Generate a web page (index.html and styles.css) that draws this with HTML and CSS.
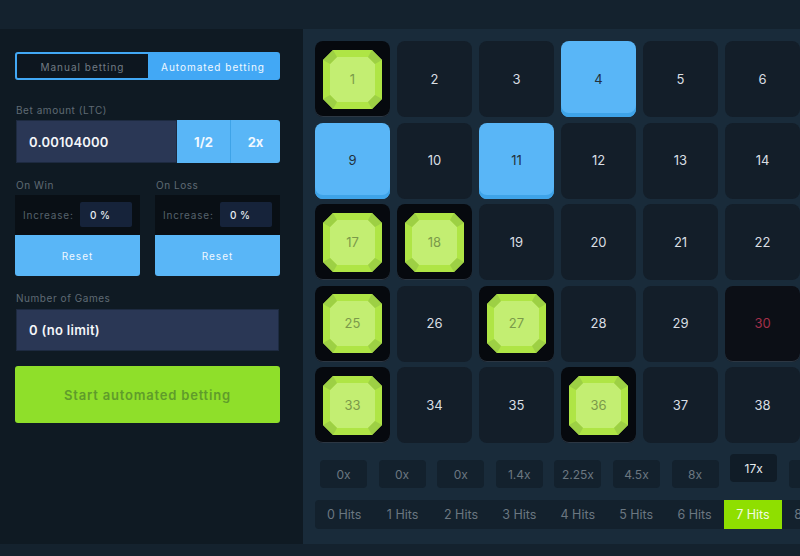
FILE: index.html
```html
<!DOCTYPE html>
<html>
<head>
    <title>Keno</title>
    <link rel="stylesheet" href="styles.css">
</head>
<body>
    <svg class="svg-defs" width="0" height="0">
        <symbol id="gem" viewBox="0 0 59 59">
            <polygon fill="#afe545" points="10,0 49,0 59,10 59,49 49,59 10,59 0,49 0,10"/>
            <polygon fill="#c3ee72" points="14,7 45,7 52,14 52,45 45,52 14,52 7,45 7,14"/>
            <polygon fill="#9dd044" points="10,0 14,7 7,14 0,10"/>
            <polygon fill="#9dd044" points="49,0 59,10 52,14 45,7"/>
            <polygon fill="#9dd044" points="59,49 49,59 45,52 52,45"/>
            <polygon fill="#9dd044" points="10,59 0,49 7,45 14,52"/>
        </symbol>
    </svg>
    <div class="topbar"></div>
    <div class="main">
        <div class="side">
            <div class="mode-toggle">
                <span class="mode-btn">Manual betting</span>
                <span class="mode-btn selected">Automated betting</span>
            </div>
            <div class="field-label bet-label">Bet amount (LTC)</div>
            <div class="bet-row">
                <span class="bet-input">0.00104000</span>
                <span class="bet-btn half">1/2</span>
                <span class="bet-btn double">2x</span>
            </div>
            <div class="strategy">
                <div class="strategy-col">
                    <div class="field-label">On Win</div>
                    <div class="increase-box">
                        <span class="increase-label">Increase:</span>
                        <span class="increase-input">0 %</span>
                    </div>
                    <div class="reset-btn">Reset</div>
                </div>
                <div class="strategy-col">
                    <div class="field-label">On Loss</div>
                    <div class="increase-box">
                        <span class="increase-label">Increase:</span>
                        <span class="increase-input">0 %</span>
                    </div>
                    <div class="reset-btn">Reset</div>
                </div>
            </div>
            <div class="field-label games-label">Number of Games</div>
            <div class="games-input">0 (no limit)</div>
            <div class="start-btn">Start automated betting</div>
        </div>
        <div class="board">
            <div class="grid">
                <div class="tile gem"><svg><use href="#gem"/></svg><span>1</span></div>
                <div class="tile"><span>2</span></div>
                <div class="tile"><span>3</span></div>
                <div class="tile picked"><span>4</span></div>
                <div class="tile"><span>5</span></div>
                <div class="tile"><span>6</span></div>
                <div class="tile picked"><span>9</span></div>
                <div class="tile"><span>10</span></div>
                <div class="tile picked"><span>11</span></div>
                <div class="tile"><span>12</span></div>
                <div class="tile"><span>13</span></div>
                <div class="tile"><span>14</span></div>
                <div class="tile gem"><svg><use href="#gem"/></svg><span>17</span></div>
                <div class="tile gem"><svg><use href="#gem"/></svg><span>18</span></div>
                <div class="tile"><span>19</span></div>
                <div class="tile"><span>20</span></div>
                <div class="tile"><span>21</span></div>
                <div class="tile"><span>22</span></div>
                <div class="tile gem"><svg><use href="#gem"/></svg><span>25</span></div>
                <div class="tile"><span>26</span></div>
                <div class="tile gem"><svg><use href="#gem"/></svg><span>27</span></div>
                <div class="tile"><span>28</span></div>
                <div class="tile"><span>29</span></div>
                <div class="tile miss"><span>30</span></div>
                <div class="tile gem"><svg><use href="#gem"/></svg><span>33</span></div>
                <div class="tile"><span>34</span></div>
                <div class="tile"><span>35</span></div>
                <div class="tile gem"><svg><use href="#gem"/></svg><span>36</span></div>
                <div class="tile"><span>37</span></div>
                <div class="tile"><span>38</span></div>
            </div>
            <div class="payouts">
                <span class="payout">0x</span>
                <span class="payout">0x</span>
                <span class="payout">0x</span>
                <span class="payout">1.4x</span>
                <span class="payout">2.25x</span>
                <span class="payout">4.5x</span>
                <span class="payout">8x</span>
                <span class="payout current">17x</span>
                <span class="payout"></span>
            </div>
            <div class="hits">
                <span class="hit">0 Hits</span>
                <span class="hit">1 Hits</span>
                <span class="hit">2 Hits</span>
                <span class="hit">3 Hits</span>
                <span class="hit">4 Hits</span>
                <span class="hit">5 Hits</span>
                <span class="hit">6 Hits</span>
                <span class="hit current">7 Hits</span>
                <span class="hit">8 Hits</span>
            </div>
        </div>
    </div>
    <div class="bottombar"></div>
</body>
</html>
```

FILE: styles.css
```css
html, body {
    margin: 0;
    height: 100%;
}
body {
    width: 800px;
    height: 556px;
    overflow: hidden;
    background: #14222e;
    font-family: Inter, "Open Sans", sans-serif;
    display: flex;
    flex-direction: column;
}
.svg-defs {
    display: block;
    height: 0;
}
.topbar {
    height: 29px;
    flex: none;
    background: #14222e;
}
.bottombar {
    height: 12px;
    flex: none;
    background: #14222e;
}
.main {
    display: flex;
    height: 515px;
    flex: none;
}
.side {
    width: 303px;
    flex: none;
    box-sizing: border-box;
    padding: 23px 23px 0 15px;
    background: #0f1a23;
}
.mode-toggle {
    display: flex;
    height: 28px;
    box-sizing: border-box;
    border: 2px solid #42a8f5;
    border-radius: 3px;
    background: #0d161f;
}
.mode-btn {
    flex: 1;
    display: flex;
    align-items: center;
    justify-content: center;
    padding-top: 1px;
    font-size: 10px;
    letter-spacing: 1px;
    color: #717b84;
}
.mode-btn.selected {
    flex: none;
    width: 130px;
    background: #42a8f5;
    color: #f0f8ff;
}
.field-label {
    font-size: 10px;
    letter-spacing: 0.55px;
    color: #5f6a74;
    line-height: 12px;
    padding-left: 1px;
}
.bet-label {
    margin-top: 24px;
    margin-bottom: 4px;
}
.bet-row {
    display: flex;
    height: 43px;
}
.bet-input {
    width: 161px;
    margin-left: 1px;
    box-sizing: border-box;
    padding-left: 12px;
    display: flex;
    align-items: center;
    background: #2a3755;
    border: 1px solid #1d2a40;
    font-size: 13px;
    font-weight: 600;
    letter-spacing: 0.2px;
    color: #f4f6f9;
}
.bet-btn {
    display: flex;
    align-items: center;
    justify-content: center;
    background: #59b6f7;
    font-size: 13px;
    font-weight: 700;
    color: #f0f8ff;
}
.half {
    width: 53px;
    border-right: 1px solid #3ea3e8;
}
.double {
    flex: 1;
    border-radius: 0 3px 3px 0;
}
.strategy {
    display: flex;
    gap: 15px;
    margin-top: 16px;
}
.strategy-col {
    flex: 1;
}
.strategy-col .field-label {
    margin-bottom: 4px;
}
.increase-box {
    height: 40px;
    display: flex;
    align-items: center;
    justify-content: space-between;
    box-sizing: border-box;
    padding: 0 8px 0 8px;
    background: #090f15;
}
.increase-label {
    font-size: 10px;
    letter-spacing: 0.8px;
    color: #56626c;
}
.increase-input {
    width: 52px;
    height: 25px;
    margin-top: -1px;
    box-sizing: border-box;
    padding-left: 10px;
    display: flex;
    align-items: center;
    border-radius: 2px;
    background: #16233a;
    font-size: 10px;
    font-weight: 500;
    letter-spacing: 0.5px;
    color: #e8edf2;
}
.reset-btn {
    height: 41px;
    display: flex;
    align-items: center;
    justify-content: center;
    border-radius: 0 0 3px 3px;
    background: #59b6f7;
    font-size: 10px;
    letter-spacing: 1px;
    color: #f0f8ff;
}
.games-label {
    margin-top: 16px;
    margin-bottom: 5px;
}
.games-input {
    height: 42px;
    margin: 0 1px;
    box-sizing: border-box;
    padding-left: 12px;
    display: flex;
    align-items: center;
    background: #2a3755;
    border: 1px solid #1d2a40;
    font-size: 13px;
    font-weight: 600;
    letter-spacing: 0.3px;
    color: #f4f6f9;
}
.start-btn {
    height: 57px;
    margin-top: 15px;
    display: flex;
    align-items: center;
    justify-content: center;
    border-radius: 3px;
    background: #8fdf2a;
    font-size: 13px;
    font-weight: 600;
    letter-spacing: 0.8px;
    color: #5f9c2b;
}
.board {
    flex: 1;
    min-width: 0;
    box-sizing: border-box;
    padding: 12px 0 0 12px;
    background: #192b3a;
    overflow: hidden;
}
.grid {
    display: grid;
    grid-template-columns: repeat(6, 75px);
    grid-auto-rows: 76px;
    column-gap: 7px;
    row-gap: 5.5px;
}
.tile {
    display: grid;
    place-items: center;
    border-radius: 8px;
    background: #131e29;
    font-size: 13px;
    color: #d9dee3;
}
.tile > * {
    grid-area: 1 / 1;
}
.tile svg {
    width: 59px;
    height: 59px;
}
.tile span {
    margin-bottom: 1px;
}
.tile.gem {
    background: #06090e;
    box-shadow: inset 0 -1px 0 #2c3743;
    color: #7b9a4a;
}
.tile.picked {
    background: #59b6f7;
    box-shadow: inset 0 -4px 0 #3ea3e8;
    color: #22303c;
}
.tile.miss {
    background: #0c0f16;
    box-shadow: inset 0 -1px 0 #2c3743;
    color: #a3304a;
}
.payouts {
    display: flex;
    gap: 11.6px;
    margin-top: 17px;
    margin-left: 5px;
}
.payout {
    width: 47px;
    height: 28px;
    flex: none;
    display: flex;
    align-items: center;
    justify-content: center;
    border-radius: 4px;
    background: #13212d;
    font-size: 12px;
    color: #6b7781;
}
.payout.current {
    transform: translateY(-6px);
    background: #101c27;
    color: #e6ebef;
}
.hits {
    display: flex;
    width: 600px;
    height: 29px;
    margin-top: 12px;
    border-radius: 4px;
    background: #13212d;
}
.hit {
    width: 58.4px;
    flex: none;
    display: flex;
    align-items: center;
    justify-content: center;
    font-size: 12.5px;
    color: #6b7781;
}
.hit.current {
    background: #8fdf00;
    color: #f2fbe0;
}
```
